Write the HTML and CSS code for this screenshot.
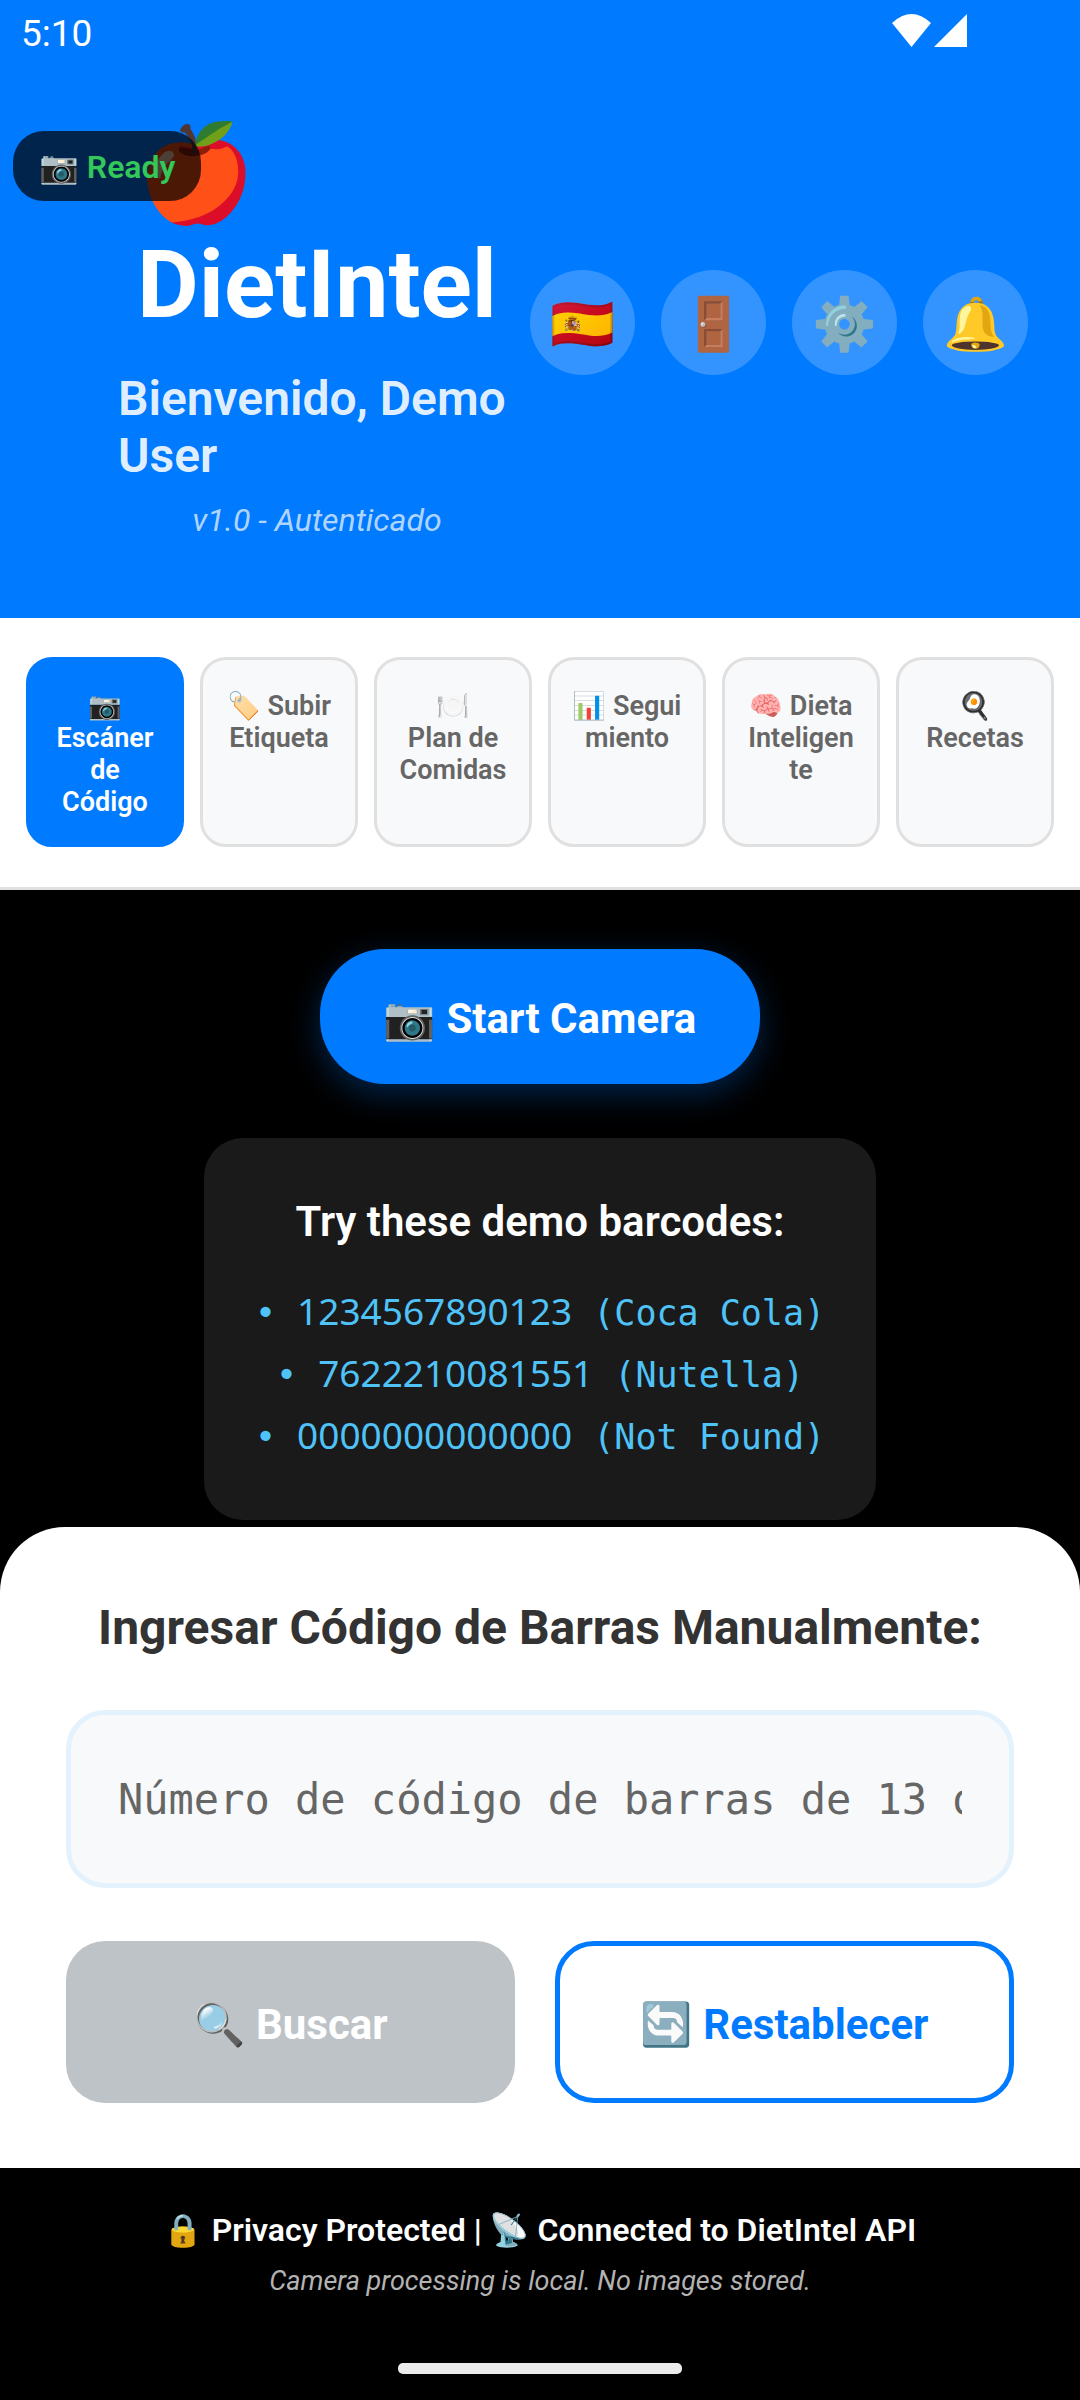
FILE: index.html
```html
<!DOCTYPE html>
<html lang="es">
<head>
<meta charset="utf-8">
<meta name="viewport" content="width=device-width, initial-scale=1">
<title>DietIntel</title>
<link rel="stylesheet" href="styles.css">
</head>
<body>
<header class="header">
  <div class="status-bar">
    <span>5:10</span>
    <svg class="signals" viewBox="0 0 76 34" aria-hidden="true"><path fill="#fff" d="M0 9Q19.500-9 39 9L19.500 33ZM42 33L75 0V33Z"/></svg>
  </div>
  <div class="camera-badge">📷 Ready</div>
  <div class="header-row">
    <div class="brand">
      <h1 class="brand-name">🍎<br>DietIntel</h1>
      <p class="welcome">Bienvenido, Demo User</p>
      <p class="version">v1.0 - Autenticado</p>
    </div>
    <div class="actions">
      <button class="round" aria-label="Idioma">🇪🇸</button>
      <button class="round" aria-label="Salir">🚪</button>
      <button class="round" aria-label="Ajustes">⚙️</button>
      <button class="round" aria-label="Avisos">🔔</button>
    </div>
  </div>
</header>
<nav class="tabs">
  <button class="tab tab-active">📷<br>Escáner<br>de<br>Código</button>
  <button class="tab">🏷️ Subir<br>Etiqueta</button>
  <button class="tab">🍽️<br>Plan de<br>Comidas</button>
  <button class="tab">📊 Segui<br>miento</button>
  <button class="tab">🧠 Dieta<br>Inteligen<br>te</button>
  <button class="tab">🍳<br>Recetas</button>
</nav>
<main>
  <section class="scanner">
    <button class="start">📷 Start Camera</button>
    <div class="demo">
      <h2 class="demo-title">Try these demo barcodes:</h2>
      <ul class="demo-list">
        <li>• <span class="digits">1234567890123</span> (Coca Cola)</li>
        <li>• <span class="digits">7622210081551</span> (Nutella)</li>
        <li>• <span class="digits">0000000000000</span> (Not Found)</li>
      </ul>
    </div>
  </section>
  <form class="manual">
    <label class="manual-title" for="barcode">Ingresar Código de Barras Manualmente:</label>
    <input class="barcode" id="barcode" type="text" inputmode="numeric" placeholder="Número de código de barras de 13 dígitos">
    <div class="form-actions">
      <button class="btn btn-search" type="submit" disabled>🔍 Buscar</button>
      <button class="btn btn-reset" type="reset">🔄 Restablecer</button>
    </div>
  </form>
</main>
<footer class="footer">
  <p class="privacy">🔒 Privacy Protected | 📡 Connected to DietIntel API</p>
  <p class="note">Camera processing is local. No images stored.</p>
  <div class="home-bar"></div>
</footer>
</body>
</html>
```
FILE: styles.css
```css
* { box-sizing: border-box; margin: 0; padding: 0; }
body { min-height: 100vh; background: #000; color: #fff; font-family: Roboto, "Noto Color Emoji", sans-serif; display: flex; flex-direction: column; }
button, input { font: inherit; border: 0; }
.header { position: relative; background: #007aff; padding-bottom: 79px; }
.status-bar { display: flex; justify-content: space-between; align-items: flex-start; height: 118px; padding: 14px 112px 0 21px; font-size: 37px; line-height: 39px; }
.signals { width: 76px; height: 34px; }
.camera-badge { position: absolute; left: 13px; top: 131px; padding: 17px 26px 15px; border-radius: 31px; background: rgba(0, 0, 0, 0.7); color: #34c759; font-size: 32px; line-height: 38px; font-weight: 600; }
.header-row { display: flex; align-items: flex-start; gap: 14px; padding: 0 52px 0 118px; }
.brand { flex: 1; display: flex; flex-direction: column; align-items: center; }
.brand-name { font-size: 95px; line-height: 111px; font-weight: 700; }
.welcome { margin-top: 30px; font-size: 48px; line-height: 57px; font-weight: 600; color: rgba(255, 255, 255, 0.9); }
.version { margin-top: 18px; font-size: 32px; line-height: 37px; font-style: italic; color: rgba(255, 255, 255, 0.7); }
.actions { display: flex; gap: 26px; margin-top: 152px; }
.round { width: 105px; height: 105px; padding-top: 4px; border-radius: 50%; background: rgba(255, 255, 255, 0.2); font-size: 52px; line-height: 62px; color: #fff; }
.tabs { display: flex; gap: 16px; padding: 39px 26px 40px; background: #fff; border-bottom: 3px solid #e0e0e0; }
.tab { flex: 1 1 0; min-width: 0; display: flex; justify-content: center; align-items: flex-start; min-height: 190px; padding-top: 30px; border: 3px solid #e0e0e0; border-radius: 26px; background: #f8f9fa; color: #666; font-size: 27px; line-height: 32px; font-weight: 600; }
.tab-active { border-color: #007aff; background: #007aff; color: #fff; }
.scanner { display: flex; flex-direction: column; align-items: center; gap: 54px; padding: 59px 26px 7px; }
.start { padding: 45px 64px 41px; border-radius: 65px; background: #007aff; color: #fff; font-size: 42px; line-height: 49px; font-weight: 700; box-shadow: 0 10px 32px rgba(0, 122, 255, 0.3); }
.demo { padding: 59px 51px 52px; border-radius: 39px; background: #1a1a1a; text-align: center; }
.demo-title { font-size: 42px; line-height: 49px; font-weight: 600; }
.demo-list { list-style: none; margin-top: 36px; color: #4fc3f7; font-family: "Droid Sans Mono", "DejaVu Sans Mono", monospace; font-size: 35px; line-height: 62px; }
.digits { font-family: "Noto Sans", sans-serif; font-size: 37px; line-height: 50px; }
.manual { display: flex; flex-direction: column; padding: 72px 66px 65px; border-radius: 65px 65px 0 0; background: #fff; }
.manual-title { color: #333; font-size: 48px; line-height: 57px; font-weight: 700; text-align: center; }
.barcode { width: 100%; height: 178px; margin: 54px 0 53px; padding: 0 47px; border: 5px solid #e3f2fd; border-radius: 39px; background: #f8f9fa; font-family: "Droid Sans Mono", "DejaVu Sans Mono", monospace; font-size: 42px; color: #333; }
.barcode::placeholder { color: #666; opacity: 1; }
.form-actions { display: flex; gap: 40px; }
.btn { flex: 1 1 0; min-height: 162px; padding: 4px 52px 0; border-radius: 39px; font-size: 42px; line-height: 49px; font-weight: 700; white-space: nowrap; }
.btn-search { background: #bdc3c7; color: #fff; }
.btn-reset { border: 5px solid #007aff; background: #fff; color: #007aff; }
.footer { flex: 1; display: flex; flex-direction: column; align-items: center; padding: 43px 26px 26px; }
.privacy { font-size: 32px; line-height: 38px; font-weight: 600; }
.note { margin-top: 16px; font-size: 27px; line-height: 32px; font-style: italic; color: #b3b3b3; }
.home-bar { width: 284px; height: 11px; margin-top: auto; border-radius: 5px; background: #ebebeb; }
```
